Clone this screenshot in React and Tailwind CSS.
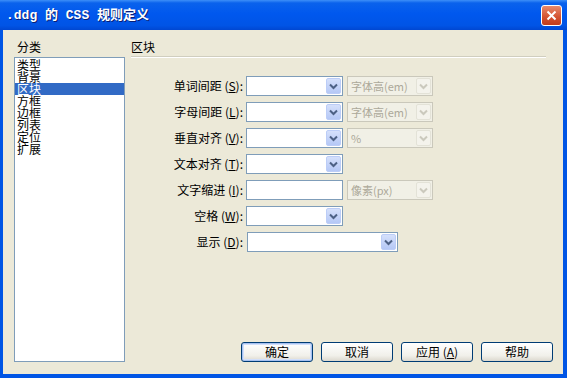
import React from 'react'

const categories = ['类型', '背景', '区块', '方框', '边框', '列表', '定位', '扩展']

function Arrow({ disabled }) {
  return (
    <div
      className={
        disabled
          ? 'w-[15px] h-[16px] m-[1px] flex items-center justify-center rounded-[2px] border border-[#e3e2d7] bg-[#f4f3ec]'
          : 'w-[15px] h-[16px] m-[1px] flex items-center justify-center rounded-[2px] border border-[#bccdf7] bg-[linear-gradient(to_bottom,#d5e0fb,#b5c8f6)]'
      }
    >
      <svg width="9" height="7" viewBox="0 0 9 7">
        <polyline
          points="1,1.5 4.5,5 8,1.5"
          fill="none"
          stroke={disabled ? '#cbc9bd' : '#4d6185'}
          strokeWidth="2"
        />
      </svg>
    </div>
  )
}

function Select({ w, text, disabled }) {
  return (
    <div
      className={
        (disabled ? 'border-[#cac8bb] bg-[#f1f0e6] ' : 'border-[#7f9db9] bg-white ') +
        'h-[20px] border flex items-center justify-between'
      }
      style={{ width: w }}
    >
      <span className="pl-[3px] text-[11px] leading-[12px] text-[#aca899]">{text}</span>
      <Arrow disabled={disabled} />
    </div>
  )
}

function Row({ label, k, children }) {
  return (
    <div className="flex items-center h-[20px]">
      <div className="w-[115px] text-right text-[12px] leading-[12px] pr-[3px] whitespace-nowrap">
        {label} (<span className="underline">{k}</span>):
      </div>
      <div className="flex items-center gap-[4px]">{children}</div>
    </div>
  )
}

function Button({ children, def }) {
  return (
    <button
      className={
        'w-[72px] h-[20px] rounded-[3px] border border-[#003c74] text-[12px] leading-[12px] bg-[linear-gradient(to_bottom,#ffffff,#f1f0ea_70%,#dcd8ce)] ' +
        (def ? 'shadow-[inset_0_0_0_1px_#a6c1f0,inset_0_0_0_2px_#d2dffa]' : '')
      }
    >
      {children}
    </button>
  )
}

export default function App() {
  return (
    <div
      className="w-[567px] h-[378px] flex flex-col bg-[#0055e5] text-black"
      style={{ fontFamily: '"Noto Sans CJK SC", "Liberation Sans", sans-serif' }}
    >
      {/* title bar */}
      <div className="h-[30px] flex items-center justify-between pl-[6px] pr-[5px] bg-[linear-gradient(to_bottom,#3d8ff8_0%,#0a62ec_10%,#0058ee_45%,#0054e6_85%,#0047d2_100%)]">
        <span
          className="text-white font-bold text-[13px] leading-[14px] pt-[2px] [text-shadow:1px_1px_0_#0a1e74]"
          style={{ fontFamily: '"Liberation Mono", "Noto Sans CJK SC", monospace' }}
        >
          .ddg 的 CSS 规则定义
        </span>
        <div className="w-[21px] h-[21px] rounded-[3px] border border-white flex items-center justify-center bg-[linear-gradient(to_bottom,#e88a6c,#d3512f_60%,#c23c1c)]">
          <svg width="11" height="11" viewBox="0 0 11 11">
            <path d="M1.5 1.5 L9.5 9.5 M9.5 1.5 L1.5 9.5" stroke="white" strokeWidth="2" />
          </svg>
        </div>
      </div>

      {/* body */}
      <div className="flex-1 ml-[3px] mr-[4px] mb-[4px] bg-[#ece9d8] flex pl-[11px] pr-[10px] pt-[11px] pb-[12px]">
        {/* categories */}
        <div className="w-[111px] flex flex-col">
          <div className="text-[12px] leading-[12px] pl-[3px]">分类</div>
          <div className="mt-[4px] flex-1 border border-[#7f9db9] bg-white pt-[1px]">
            {categories.map((c) => (
              <div
                key={c}
                className={
                  'h-[12px] text-[12px] leading-[12px] pl-[2px] ' +
                  (c === '区块' ? 'bg-[#316ac5] text-white' : '')
                }
              >
                {c}
              </div>
            ))}
          </div>
        </div>

        {/* panel */}
        <div className="flex-1 ml-[6px] flex flex-col">
          <div className="text-[12px] leading-[12px]">区块</div>
          <div className="mt-[3px] mr-[7px] border-t border-[#d0cebf] border-b border-b-white"></div>

          <div className="mt-[18px] flex flex-col gap-[6px]">
            <Row label="单词间距" k="S">
              <Select w="97px" />
              <Select w="86px" text="字体高(em)" disabled />
            </Row>
            <Row label="字母间距" k="L">
              <Select w="97px" />
              <Select w="86px" text="字体高(em)" disabled />
            </Row>
            <Row label="垂直对齐" k="V">
              <Select w="97px" />
              <Select w="86px" text="%" disabled />
            </Row>
            <Row label="文本对齐" k="T">
              <Select w="97px" />
            </Row>
            <Row label="文字缩进" k="I">
              <div className="w-[97px] h-[20px] border border-[#7f9db9] bg-white"></div>
              <Select w="86px" text="像素(px)" disabled />
            </Row>
            <Row label="空格" k="W">
              <Select w="97px" />
            </Row>
            <Row label="显示" k="D">
              <div className="ml-[1px]">
                <Select w="151px" />
              </div>
            </Row>
          </div>

          <div className="flex-1"></div>
          <div className="flex justify-end gap-[8px]">
            <Button def>确定</Button>
            <Button>取消</Button>
            <Button>
              应用 (<span className="underline">A</span>)
            </Button>
            <Button>帮助</Button>
          </div>
        </div>
      </div>
    </div>
  )
}
